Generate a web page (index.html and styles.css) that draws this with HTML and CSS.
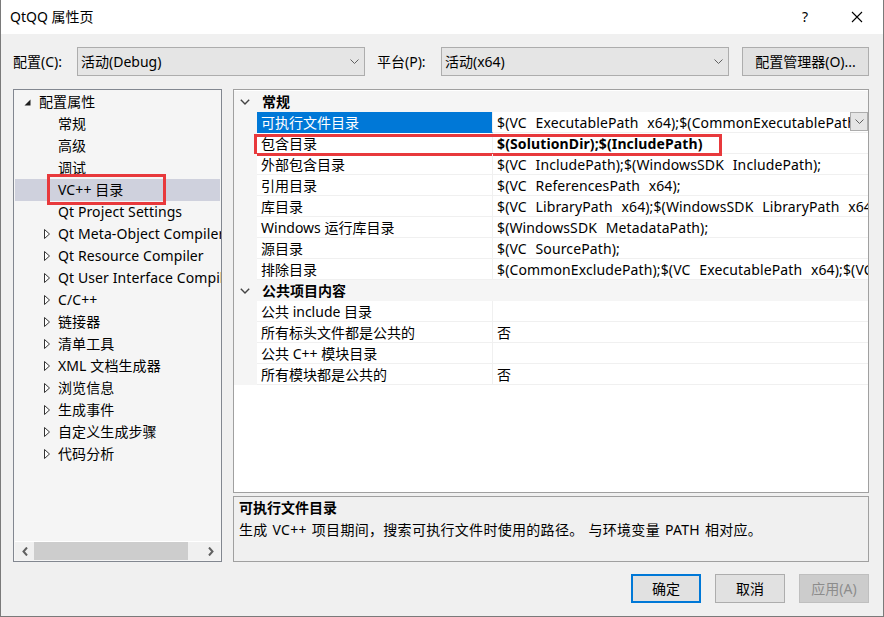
FILE: index.html
```html
<!DOCTYPE html>
<html lang="zh-CN">
<head>
<meta charset="utf-8">
<title>QtQQ 属性页</title>
<link rel="stylesheet" href="styles.css">
</head>
<body>
<div class="window">
  <div class="titlebar">
    <span class="title">QtQQ 属性页</span>
    <span class="help">?</span>
    <span class="close"><svg width="12" height="12" viewBox="0 0 12 12"><path d="M1 1L11 11M11 1L1 11" stroke="#000" stroke-width="1.1" fill="none"/></svg></span>
  </div>
  <div class="content">
    <div class="toprow">
      <span class="lbl">配置(C):</span>
      <div class="combo"><span class="ctext">活动(Debug)</span><svg class="chev" width="9" height="5" viewBox="0 0 9 5"><path d="M0.5 0.5L4.5 4.5L8.5 0.5" stroke="#606060" fill="none"/></svg></div>
      <span class="lbl lbl2">平台(P):</span>
      <div class="combo"><span class="ctext">活动(x64)</span><svg class="chev" width="9" height="5" viewBox="0 0 9 5"><path d="M0.5 0.5L4.5 4.5L8.5 0.5" stroke="#606060" fill="none"/></svg></div>
      <button class="btn btn-mgr">配置管理器(O)...</button>
    </div>
    <div class="panels">
      <div class="tree">
        <div class="tree-list">
          <div class="ti top"><span class="exp"><svg width="7" height="7" viewBox="0 0 7 7"><path d="M6.5 0.5V6.5H0.5Z" fill="#1e1e1e"/></svg></span>配置属性</div>
          <div class="ti"><span class="exp"></span>常规</div>
          <div class="ti"><span class="exp"></span>高级</div>
          <div class="ti"><span class="exp"></span>调试</div>
          <div class="ti sel"><span class="exp"></span>VC++ 目录<span class="mark mark1"></span></div>
          <div class="ti"><span class="exp"></span>Qt Project Settings</div>
          <div class="ti"><span class="exp"><svg class="tri" width="6" height="10" viewBox="0 0 6 10"><path d="M0.5 0.5L5.5 5L0.5 9.5Z" fill="#fff" stroke="#333"/></svg></span>Qt Meta-Object Compiler</div>
          <div class="ti"><span class="exp"><svg class="tri" width="6" height="10" viewBox="0 0 6 10"><path d="M0.5 0.5L5.5 5L0.5 9.5Z" fill="#fff" stroke="#333"/></svg></span>Qt Resource Compiler</div>
          <div class="ti"><span class="exp"><svg class="tri" width="6" height="10" viewBox="0 0 6 10"><path d="M0.5 0.5L5.5 5L0.5 9.5Z" fill="#fff" stroke="#333"/></svg></span>Qt User Interface Compiler</div>
          <div class="ti"><span class="exp"><svg class="tri" width="6" height="10" viewBox="0 0 6 10"><path d="M0.5 0.5L5.5 5L0.5 9.5Z" fill="#fff" stroke="#333"/></svg></span>C/C++</div>
          <div class="ti"><span class="exp"><svg class="tri" width="6" height="10" viewBox="0 0 6 10"><path d="M0.5 0.5L5.5 5L0.5 9.5Z" fill="#fff" stroke="#333"/></svg></span>链接器</div>
          <div class="ti"><span class="exp"><svg class="tri" width="6" height="10" viewBox="0 0 6 10"><path d="M0.5 0.5L5.5 5L0.5 9.5Z" fill="#fff" stroke="#333"/></svg></span>清单工具</div>
          <div class="ti"><span class="exp"><svg class="tri" width="6" height="10" viewBox="0 0 6 10"><path d="M0.5 0.5L5.5 5L0.5 9.5Z" fill="#fff" stroke="#333"/></svg></span>XML 文档生成器</div>
          <div class="ti"><span class="exp"><svg class="tri" width="6" height="10" viewBox="0 0 6 10"><path d="M0.5 0.5L5.5 5L0.5 9.5Z" fill="#fff" stroke="#333"/></svg></span>浏览信息</div>
          <div class="ti"><span class="exp"><svg class="tri" width="6" height="10" viewBox="0 0 6 10"><path d="M0.5 0.5L5.5 5L0.5 9.5Z" fill="#fff" stroke="#333"/></svg></span>生成事件</div>
          <div class="ti"><span class="exp"><svg class="tri" width="6" height="10" viewBox="0 0 6 10"><path d="M0.5 0.5L5.5 5L0.5 9.5Z" fill="#fff" stroke="#333"/></svg></span>自定义生成步骤</div>
          <div class="ti"><span class="exp"><svg class="tri" width="6" height="10" viewBox="0 0 6 10"><path d="M0.5 0.5L5.5 5L0.5 9.5Z" fill="#fff" stroke="#333"/></svg></span>代码分析</div>
        </div>
        <div class="hscroll">
          <span class="sbtn"><svg width="6" height="9" viewBox="0 0 6 9"><path d="M5 0.5L1.5 4.5L5 8.5" stroke="#606060" stroke-width="2" fill="none"/></svg></span>
          <span class="thumb"></span>
          <span class="track"></span>
          <span class="sbtn"><svg width="6" height="9" viewBox="0 0 6 9"><path d="M1 0.5L4.5 4.5L1 8.5" stroke="#606060" stroke-width="2" fill="none"/></svg></span>
        </div>
      </div>
      <div class="right">
        <div class="grid">
          <div class="cat"><span class="gut"><svg width="10" height="6" viewBox="0 0 10 6"><path d="M0.8 0.8L5 5L9.2 0.8" stroke="#444" stroke-width="1.4" fill="none"/></svg></span><span class="cname">常规</span></div>
          <div class="row"><span class="gut"></span><span class="name selcell">可执行文件目录</span><span class="val"><span class="vtext">$(VC ExecutablePath x64);$(CommonExecutablePath)</span><span class="ddbtn"><svg width="9" height="5" viewBox="0 0 9 5"><path d="M0.5 0.5L4.5 4.5L8.5 0.5" stroke="#606060" fill="none"/></svg></span></span></div>
          <div class="row"><span class="gut"></span><span class="name">包含目录</span><span class="val"><span class="vtext bold">$(SolutionDir);$(IncludePath)</span></span><span class="mark mark2"></span></div>
          <div class="row"><span class="gut"></span><span class="name">外部包含目录</span><span class="val"><span class="vtext">$(VC IncludePath);$(WindowsSDK IncludePath);</span></span></div>
          <div class="row"><span class="gut"></span><span class="name">引用目录</span><span class="val"><span class="vtext">$(VC ReferencesPath x64);</span></span></div>
          <div class="row"><span class="gut"></span><span class="name">库目录</span><span class="val"><span class="vtext">$(VC LibraryPath x64);$(WindowsSDK LibraryPath x64)</span></span></div>
          <div class="row"><span class="gut"></span><span class="name">Windows 运行库目录</span><span class="val"><span class="vtext">$(WindowsSDK MetadataPath);</span></span></div>
          <div class="row"><span class="gut"></span><span class="name">源目录</span><span class="val"><span class="vtext">$(VC SourcePath);</span></span></div>
          <div class="row"><span class="gut"></span><span class="name">排除目录</span><span class="val"><span class="vtext">$(CommonExcludePath);$(VC ExecutablePath x64);$(VC LibraryPath x64)</span></span></div>
          <div class="cat"><span class="gut"><svg width="10" height="6" viewBox="0 0 10 6"><path d="M0.8 0.8L5 5L9.2 0.8" stroke="#444" stroke-width="1.4" fill="none"/></svg></span><span class="cname">公共项目内容</span></div>
          <div class="row"><span class="gut"></span><span class="name">公共 include 目录</span><span class="val"><span class="vtext"></span></span></div>
          <div class="row"><span class="gut"></span><span class="name">所有标头文件都是公共的</span><span class="val"><span class="vtext">否</span></span></div>
          <div class="row"><span class="gut"></span><span class="name">公共 C++ 模块目录</span><span class="val"><span class="vtext"></span></span></div>
          <div class="row"><span class="gut"></span><span class="name">所有模块都是公共的</span><span class="val"><span class="vtext">否</span></span></div>
        </div>
        <div class="desc">
          <div class="dtitle">可执行文件目录</div>
          <div class="dtext">生成 VC++ 项目期间，搜索可执行文件时使用的路径。 与环境变量 PATH 相对应。</div>
        </div>
      </div>
    </div>
    <div class="btnrow">
      <button class="btn btn-ok">确定</button>
      <button class="btn">取消</button>
      <button class="btn btn-dis">应用(A)</button>
    </div>
  </div>
</div>
</body>
</html>
```

FILE: styles.css
```css
* { box-sizing: border-box; margin: 0; padding: 0; }
html, body { width: 884px; height: 617px; overflow: hidden; }
body {
  font-family: "Noto Sans", "Noto Sans CJK SC", sans-serif;
  font-size: 14px;
  color: #000;
  background: #fff;
}
.window {
  width: 884px;
  height: 617px;
  display: flex;
  flex-direction: column;
  border: 1px solid #7a7a7a;
  border-top: none;
  background: #f0f0f0;
}
.titlebar {
  height: 34px;
  flex: none;
  background: #fff;
  display: flex;
  align-items: center;
  padding-left: 9px;
  line-height: 20px;
}
.title { flex: 1; }
.help { width: 46px; margin-right: 6px; text-align: center; font-size: 14px; }
.close { width: 46px; margin-right: 3px; display: flex; justify-content: center; align-items: center; }

.content {
  flex: 1;
  padding: 13px 14px 0 12px;
  display: flex;
  flex-direction: column;
}
.toprow {
  height: 29px;
  display: flex;
  align-items: center;
  flex: none;
}
.lbl { width: 64px; flex: none; line-height: 20px; }
.lbl2 { margin-left: 12px; }
.combo {
  width: 288px;
  height: 29px;
  flex: none;
  border: 1px solid #adadad;
  background: #e5e5e5;
  display: flex;
  align-items: center;
  padding: 0 5px 0 3px;
}
.ctext { flex: 1; line-height: 20px; }
.chev { flex: none; }
.btn {
  font-family: inherit;
  font-size: 14px;
  color: #000;
  background: #e1e1e1;
  border: 1px solid #adadad;
  height: 29px;
  width: 70px;
  line-height: 20px;
}
.btn-mgr { width: 127px; margin-left: 13px; }

.panels {
  margin-top: 13px;
  height: 473px;
  display: flex;
  gap: 11px;
  flex: none;
}
.tree {
  width: 209px;
  flex: none;
  border: 1px solid #828790;
  background: #f5f5f5;
  display: flex;
  flex-direction: column;
}
.tree-list {
  flex: 1;
  overflow: hidden;
  padding-top: 1px;
}
.ti {
  height: 22px;
  line-height: 22px;
  display: flex;
  align-items: center;
  white-space: nowrap;
  padding-left: 30px;
  position: relative;
  letter-spacing: 0.1px;
}
.ti.top { padding-left: 10px; }
.exp { width: 14px; flex: none; display: flex; align-items: center; }
.top .exp { width: 15px; }
.ti.sel { background: #cfd1dd; margin: 0 1px; padding-left: 29px; }
.mark {
  position: absolute;
  border: 3px solid #e8393c;
  pointer-events: none;
}
.mark1 { left: 32px; top: -5px; width: 119px; height: 31px; }

.hscroll {
  height: 19px;
  flex: none;
  margin: 0 1px 1px 1px;
  border-top: 1px solid #fff;
  background: #f0f0f0;
  display: flex;
}
.sbtn { width: 19px; flex: none; display: flex; align-items: center; justify-content: center; }
.thumb { width: 154px; background: #cdcdcd; flex: none; }
.track { flex: 1; }

.right {
  width: 636px;
  flex: none;
  display: flex;
  flex-direction: column;
  gap: 3px;
}
.grid {
  height: 404px;
  flex: none;
  border: 1px solid #a0a0a0;
  background: #fff;
  padding-top: 1px;
  overflow: hidden;
}
.cat {
  height: 21px;
  display: flex;
  align-items: center;
  background: #f5f5f5;
  font-weight: bold;
}
.gut { width: 23px; flex: none; display: flex; justify-content: center; align-items: center; }
.cat .gut { padding-right: 1px; }
.cname { padding-left: 5px; line-height: 21px; }
.row {
  height: 21px;
  display: flex;
  position: relative;
}
.row .gut { background: #f5f5f5; }
.name {
  width: 236px;
  flex: none;
  padding-left: 4px;
  padding-top: 1px;
  line-height: 19px;
  border-bottom: 1px solid #f0f0f0;
  border-right: 1px solid #f0f0f0;
  white-space: nowrap;
}
.selcell { background: #0078d7; color: #fff; border-bottom-color: #0078d7; }
.val {
  flex: 1;
  min-width: 0;
  display: flex;
  padding-left: 4px;
  padding-top: 1px;
  line-height: 19px;
  border-bottom: 1px solid #f0f0f0;
  overflow: hidden;
  white-space: nowrap;
}
.vtext { flex: 1; min-width: 0; overflow: hidden; word-spacing: 5px; letter-spacing: 0.12px; }
.bold { font-weight: bold; }
.ddbtn {
  width: 18px;
  height: 19px;
  margin-top: -1px;
  flex: none;
  border: 1px solid #acacac;
  background: #e5e5e5;
  display: flex;
  align-items: center;
  justify-content: center;
}
.mark2 { left: 20px; top: 1px; width: 468px; height: 22px; }

.desc {
  height: 66px;
  flex: none;
  border: 1px solid #a0a0a0;
  background: #f0f0f0;
  padding: 0 5px;
  line-height: 22px;
}
.dtitle { font-weight: bold; }
.dtext { letter-spacing: 0.3px; word-spacing: 1px; }

.btnrow {
  margin-top: 12px;
  display: flex;
  justify-content: flex-end;
  gap: 14px;
  flex: none;
}
.btn-ok { border: 2px solid #0078d7; }
.btn-dis { background: #cccccc; border-color: #bfbfbf; color: #8c8c8c; }
```
